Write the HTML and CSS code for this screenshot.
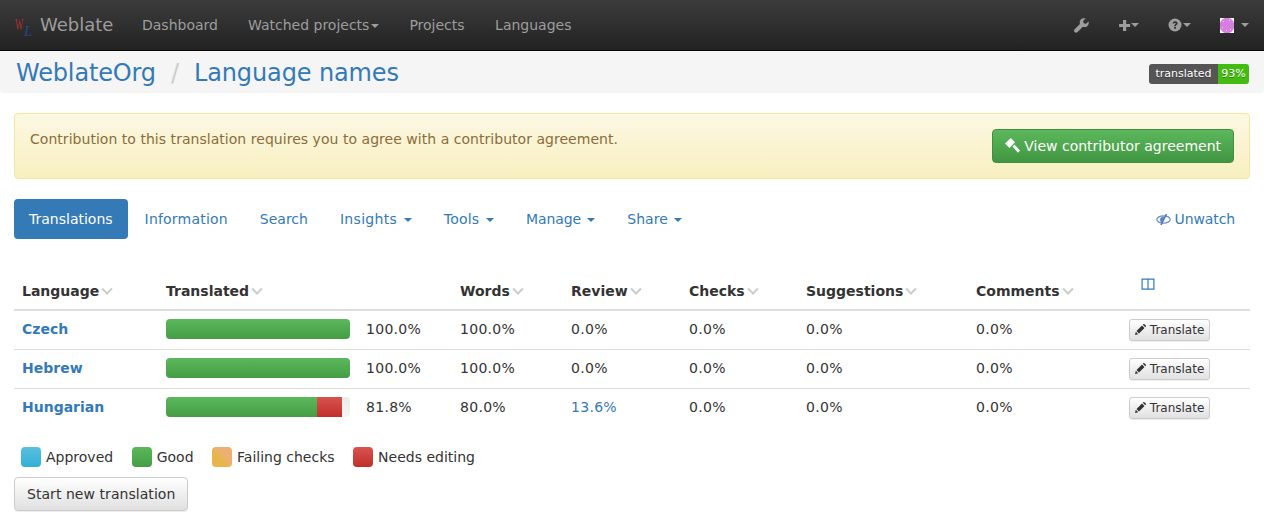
FILE: index.html
```html
<!DOCTYPE html>
<html>
<head>
  <meta charset="UTF-8" />
  <title>Language names - Weblate</title>
  <link rel="stylesheet" href="styles.css">
</head>
<body>
  <!-- Top navigation -->
  <nav class="navbar">
    <a class="brand" href="#">
      <svg class="brand-logo" width="18" height="22" viewBox="0 0 18 22">
        <text x="0" y="16" class="logo-w" transform="scale(.55 1)">W</text>
        <text x="9" y="22" class="logo-l">L</text>
      </svg>
      Weblate
    </a>
    <ul class="nav-links">
      <li><a href="#">Dashboard</a></li>
      <li><a href="#">Watched projects<span class="caret"></span></a></li>
      <li><a href="#">Projects</a></li>
      <li><a href="#">Languages</a></li>
    </ul>
    <ul class="nav-right">
      <li>
        <a href="#">
          <svg width="15" height="15" viewBox="0 0 14 14"><path class="icon-fill" d="M13.6 3.2 11.2 5.4 9 4.900 8.500 2.800 10.800.5C9.200-.2 7.400.2 6.400 1.300 5.300 2.400 5 4 5.600 5.500L.6 10.500C-.1 11.200-.1 12.400.6 13.100 1.400 13.900 2.600 13.900 3.300 13.100L8.300 8.200C9.800 8.800 11.400 8.500 12.500 7.400 13.600 6.300 14 4.700 13.600 3.200Z"/></svg>
        </a>
      </li>
      <li>
        <a href="#">
          <svg width="13" height="13" viewBox="0 0 13 13"><path class="icon-fill" d="M5 1h3.200v3.900h3.900v3.200H8.200V12H5V8.100H1.100V4.900H5z"/></svg><span class="caret caret-tight"></span>
        </a>
      </li>
      <li>
        <a href="#">
          <svg width="14" height="14" viewBox="0 0 14 14"><circle class="icon-fill" cx="7" cy="7" r="6.500"/><path class="icon-cut" d="M4.500 5.300C4.700 3.900 5.700 3.200 7.100 3.200 8.500 3.200 9.600 4 9.600 5.300 9.600 6.900 7.900 6.900 7.900 8.200H6.200C6.200 6.400 7.700 6.200 7.700 5.400 7.700 5 7.400 4.800 7 4.800 6.600 4.800 6.300 5.100 6.200 5.600ZM6.200 9h1.700v1.700H6.200z"/></svg><span class="caret caret-near"></span>
        </a>
      </li>
      <li>
        <a href="#">
          <svg class="avatar" width="14" height="15" viewBox="0 0 14 15">
            <rect width="14" height="15" fill="#fff"/>
            <ellipse cx="7" cy="7.500" rx="7.400" ry="7.800" fill="#d67fe0"/>
            <path fill="#eccdf0" d="M3 3h1v1H3zM9 2h1v1H9zM2 9h1v1H2zM6 12h1v1H6zM10 11h1v1h-1z"/>
          </svg><span class="caret caret-wide"></span>
        </a>
      </li>
    </ul>
  </nav>

  <!-- Breadcrumb -->
  <div class="breadcrumb">
    <div class="crumbs">
      <a class="crumb-first" href="#">WeblateOrg</a>
      <span class="crumb-sep">/</span>
      <a href="#">Language names</a>
    </div>
    <div class="badge"><span class="badge-label">translated</span><span class="badge-value">93%</span></div>
  </div>

  <div class="content">
    <div class="alert">
      <p>Contribution to this translation requires you to agree with a contributor agreement.</p>
      <a class="btn btn-success" href="#">
        <svg class="gavel" width="15" height="15" viewBox="0 0 15 15"><path fill="#fff" d="M0 5.500 5.800 0 10 4.300 4.500 10ZM7.500 8.500 9.500 6.500 15 12.500 13 14.800Z"/></svg>
        View contributor agreement
      </a>
    </div>

    <!-- Tabs -->
    <ul class="pills">
      <li class="active"><a href="#">Translations</a></li>
      <li><a class="wide" href="#">Information</a></li>
      <li><a href="#">Search</a></li>
      <li><a class="wider" href="#">Insights <span class="caret caret-blue"></span></a></li>
      <li><a class="wide" href="#">Tools <span class="caret caret-blue"></span></a></li>
      <li><a class="narrow" href="#">Manage <span class="caret caret-blue"></span></a></li>
      <li><a href="#">Share <span class="caret caret-blue"></span></a></li>
      <li class="pill-right">
        <a class="narrow" href="#">
          <svg class="eye" width="15" height="13" viewBox="0 0 15 13">
            <ellipse cx="7.500" cy="6.500" rx="6.700" ry="3.700" fill="none" stroke="#6a8fc4" stroke-width="1.200"/>
            <path fill="#5a84bd" d="M7.500 3.500 8.500 4 5.500 9.500C4.500 9 4 7.800 4 6.500 4 5 5.500 3.500 7.500 3.500Z"/>
            <path stroke="#4a78b5" stroke-width="1.500" d="M10.500 1 5 12"/>
          </svg>
          Unwatch
        </a>
      </li>
    </ul>

    <table class="stats">
      <colgroup>
        <col class="col-lang"><col class="col-translated"><col class="col-words"><col class="col-review">
        <col class="col-checks"><col class="col-sugg"><col class="col-comments"><col>
      </colgroup>
      <thead>
        <tr>
          <th>Language<span class="sort"></span></th>
          <th>Translated<span class="sort"></span></th>
          <th>Words<span class="sort"></span></th>
          <th>Review<span class="sort"></span></th>
          <th>Checks<span class="sort"></span></th>
          <th>Suggestions<span class="sort"></span></th>
          <th>Comments<span class="sort"></span></th>
          <th class="th-columns">
            <svg width="14" height="12" viewBox="0 0 14 12"><path fill="none" stroke="#337ab7" stroke-width="1.200" d="M1.100 1.100h11.800v10H1.100zM7 1.100v10"/></svg>
          </th>
        </tr>
      </thead>
      <tbody>
        <tr>
          <td><a class="lang" href="#">Czech</a></td>
          <td>
            <div class="progress-cell">
              <div class="progress"><div class="bar bar-good" style="width:100%"></div></div>
              <span>100.0%</span>
            </div>
          </td>
          <td>100.0%</td>
          <td>0.0%</td>
          <td>0.0%</td>
          <td>0.0%</td>
          <td>0.0%</td>
          <td class="td-action"><a class="btn-xs" href="#"><svg class="pencil" width="11" height="11" viewBox="0 0 11 11"><path d="M0 11 .8 7.800 3.200 10.200ZM1.500 7 7 1.500 9.500 4 4 9.500ZM7.800.7 8.400.2C8.700-.1 9.100-.1 9.400.2L10.800 1.600C11.100 1.900 11.100 2.300 10.800 2.600L10.300 3.200Z"/></svg> Translate</a></td>
        </tr>
        <tr>
          <td><a class="lang" href="#">Hebrew</a></td>
          <td>
            <div class="progress-cell">
              <div class="progress"><div class="bar bar-good" style="width:100%"></div></div>
              <span>100.0%</span>
            </div>
          </td>
          <td>100.0%</td>
          <td>0.0%</td>
          <td>0.0%</td>
          <td>0.0%</td>
          <td>0.0%</td>
          <td class="td-action"><a class="btn-xs" href="#"><svg class="pencil" width="11" height="11" viewBox="0 0 11 11"><path d="M0 11 .8 7.800 3.200 10.200ZM1.500 7 7 1.500 9.500 4 4 9.500ZM7.800.7 8.400.2C8.700-.1 9.100-.1 9.400.2L10.800 1.600C11.100 1.900 11.100 2.300 10.800 2.600L10.300 3.200Z"/></svg> Translate</a></td>
        </tr>
        <tr>
          <td><a class="lang" href="#">Hungarian</a></td>
          <td>
            <div class="progress-cell">
              <div class="progress"><div class="bar bar-good" style="width:81.8%"></div><div class="bar bar-edit" style="width:13.6%"></div></div>
              <span>81.8%</span>
            </div>
          </td>
          <td>80.0%</td>
          <td><a href="#">13.6%</a></td>
          <td>0.0%</td>
          <td>0.0%</td>
          <td>0.0%</td>
          <td class="td-action"><a class="btn-xs" href="#"><svg class="pencil" width="11" height="11" viewBox="0 0 11 11"><path d="M0 11 .8 7.800 3.200 10.200ZM1.500 7 7 1.500 9.500 4 4 9.500ZM7.800.7 8.400.2C8.700-.1 9.100-.1 9.400.2L10.800 1.600C11.100 1.900 11.100 2.300 10.800 2.600L10.300 3.200Z"/></svg> Translate</a></td>
        </tr>
      </tbody>
    </table>

    <div class="legend">
      <span class="legend-item"><span class="swatch swatch-approved"></span>Approved</span>
      <span class="legend-item"><span class="swatch swatch-good"></span>Good</span>
      <span class="legend-item"><span class="swatch swatch-checks"></span>Failing checks</span>
      <span class="legend-item"><span class="swatch swatch-edit"></span>Needs editing</span>
    </div>

    <a class="btn btn-default" href="#">Start new translation</a>
  </div>
</body>
</html>
```

FILE: styles.css
```css
* {
  box-sizing: border-box;
}

html,
body {
  height: 525px;
  overflow: hidden;
}

body {
  margin: 0;
  font-family: "DejaVu Sans", sans-serif;
  font-size: 14px;
  line-height: 20px;
  color: #333;
  background-color: #fff;
}

a {
  color: #337ab7;
  text-decoration: none;
}

ul {
  list-style: none;
  margin: 0;
  padding: 0;
}

.caret {
  display: inline-block;
  width: 0;
  height: 0;
  margin-left: 2px;
  vertical-align: middle;
  border-top: 4px solid #9d9d9d;
  border-left: 4px solid transparent;
  border-right: 4px solid transparent;
}

.caret-wide {
  margin-left: 7px;
}

.caret-tight {
  margin-left: 0;
}

.caret-near {
  margin-left: 1px;
}

.caret-blue {
  border-top-color: #337ab7;
  margin-left: 2px;
}

/* Navbar */
.navbar {
  display: flex;
  align-items: center;
  height: 51px;
  background-image: linear-gradient(to bottom, #3c3c3c 0, #222 100%);
  border-bottom: 1px solid #080808;
}

.brand {
  display: flex;
  align-items: center;
  gap: 7px;
  margin-left: 15px;
  width: 127px;
  color: #9d9d9d;
  font-size: 18px;
}

.brand-logo {
  flex: none;
  overflow: visible;
}

.logo-w {
  font-family: "Liberation Serif", serif;
  font-size: 16px;
  fill: #b03030;
}

.logo-l {
  font-family: "Liberation Serif", serif;
  font-style: italic;
  font-size: 15px;
  fill: #2a4590;
}

.nav-links {
  display: flex;
  gap: 30px;
}

.nav-links li:last-child {
  margin-left: 0.5px;
}

.nav-links a {
  color: #9d9d9d;
}

.nav-right {
  display: flex;
  align-items: center;
  margin-left: auto;
  margin-right: 15px;
}

.nav-right a {
  display: flex;
  align-items: center;
  margin-left: 29px;
}

.icon-fill {
  fill: #9d9d9d;
}

.icon-cut {
  fill: #2e2e2e;
}

/* Breadcrumb */
.breadcrumb {
  display: flex;
  align-items: center;
  justify-content: space-between;
  height: 42px;
  padding: 0 15px 0 16px;
  background-color: #f5f5f5;
  border-radius: 0 0 4px 4px;
}

.crumbs {
  display: flex;
  padding-top: 2px;
  font-size: 24px;
  line-height: 42px;
  letter-spacing: -0.12px;
}

.crumb-first {
  letter-spacing: -0.15px;
}

.crumb-sep {
  color: #ccc;
  padding: 0 15px;
}

.badge {
  display: flex;
  height: 20px;
  margin-top: 4px;
  font-size: 11px;
  line-height: 20px;
  color: #fff;
  text-shadow: 0 1px 0 rgba(1, 1, 1, 0.3);
  font-weight: 600;
  border-radius: 3px;
  overflow: hidden;
}

.badge-label {
  width: 69px;
  text-align: center;
  background-color: #555;
  font-weight: normal;
}

.badge-value {
  width: 31px;
  text-align: center;
  font-weight: normal;
  background-color: #4b1;
}

/* Alert and page content */
.content {
  padding: 20px 14px 0;
}

.alert {
  display: flex;
  justify-content: space-between;
  height: 66px;
  padding: 15px 15px 0;
  color: #8a6d3b;
  letter-spacing: 0.035px;
  background-image: linear-gradient(to bottom, #fcf8e3 0, #f8efc0 100%);
  border: 1px solid #f5e79e;
  border-radius: 4px;
}

.alert p {
  margin: 0;
}

.btn {
  display: inline-block;
  padding: 6px 12px;
  border: 1px solid transparent;
  border-radius: 4px;
}

.btn-success {
  height: 34px;
  color: #fff;
  letter-spacing: 0;
  background-image: linear-gradient(to bottom, #5cb85c 0, #419641 100%);
  border-color: #3e8f3e;
}

.gavel {
  vertical-align: -2px;
}

.btn-default {
  color: #333;
  letter-spacing: 0.05px;
  background-image: linear-gradient(to bottom, #fff 0, #e0e0e0 100%);
  border-color: #ccc;
  box-shadow: 0 1px 1px rgba(0, 0, 0, 0.075);
}

/* Tabs */
.pills {
  display: flex;
  margin-top: 20px;
}

.pills a {
  display: block;
  height: 40px;
  padding: 10px 15px;
  border-radius: 4px;
}

.pills .wide {
  letter-spacing: 0.2px;
}

.pills .wider {
  letter-spacing: 0.3px;
}

.pills .narrow {
  letter-spacing: -0.1px;
}

.pills li {
  margin-right: 2px;
}

.pills .active a {
  color: #fff;
  background-color: #337ab7;
}

.pills .pill-right {
  margin-left: auto;
  margin-right: 0;
}

.eye {
  margin-right: -1px;
  vertical-align: -2px;
}

/* Stats table */
.stats {
  width: 100%;
  margin-top: 31px;
  border-collapse: collapse;
  table-layout: fixed;
}

.col-lang { width: 144px; }
.col-translated { width: 294px; }
.col-words { width: 111px; }
.col-review { width: 118px; }
.col-checks { width: 117px; }
.col-sugg { width: 170px; }
.col-comments { width: 153px; }

.stats th {
  height: 38px;
  padding: 8px;
  color: #333;
  text-align: left;
  vertical-align: bottom;
  border-bottom: 2px solid #ddd;
}

.stats td {
  height: 39px;
  padding: 0 8px 2px;
  letter-spacing: 0.3px;
  border-top: 1px solid #ddd;
}

.stats .td-action {
  padding-bottom: 0;
}

.stats tbody tr:first-child td {
  border-top: 0;
}

.sort {
  display: inline-block;
  width: 8px;
  height: 8px;
  margin-left: 4px;
  border-right: 2px solid #ccc;
  border-bottom: 2px solid #ccc;
  transform: rotate(45deg) translate(-2px, -2px);
}

.th-columns {
  padding-left: 20px !important;
}

.th-columns svg {
  display: block;
  margin-bottom: 11px;
}

.lang {
  font-weight: bold;
  letter-spacing: 0;
}

.progress-cell {
  display: flex;
  align-items: center;
  gap: 16px;
}

.progress {
  display: flex;
  flex: none;
  width: 184px;
  height: 20px;
  background-image: linear-gradient(to bottom, #ebebeb 0, #f5f5f5 100%);
  border-radius: 4px;
  overflow: hidden;
}

.bar {
  height: 100%;
}

.bar-good {
  background-image: linear-gradient(to bottom, #5cb85c 0, #449d44 100%);
}

.bar-edit {
  background-image: linear-gradient(to bottom, #d9534f 0, #c12e2a 100%);
}

.btn-xs {
  display: inline-block;
  height: 22px;
  padding: 0 5px;
  font-size: 12px;
  line-height: 20px;
  letter-spacing: 0;
  color: #333;
  background-image: linear-gradient(to bottom, #fff 0, #e0e0e0 100%);
  border: 1px solid #ccc;
  border-radius: 3px;
  box-shadow: 0 1px 1px rgba(0, 0, 0, 0.075);
}

.pencil {
  fill: #333;
  vertical-align: -1px;
}

/* Legend */
.legend {
  display: flex;
  gap: 18.5px;
  margin-top: 20px;
  padding-left: 7px;
  height: 30px;
}

.legend-item {
  display: flex;
  gap: 5px;
}

.swatch {
  width: 20px;
  height: 20px;
  border-radius: 4px;
}

.swatch-approved {
  background-image: linear-gradient(to bottom, #5bc0de 0, #31b0d5 100%);
}

.swatch-good {
  background-image: linear-gradient(to bottom, #5cb85c 0, #449d44 100%);
}

.swatch-checks {
  background-image: linear-gradient(45deg, #e8b54c 50%, #edb070 50%);
}

.swatch-edit {
  background-image: linear-gradient(to bottom, #d9534f 0, #c12e2a 100%);
}
```
